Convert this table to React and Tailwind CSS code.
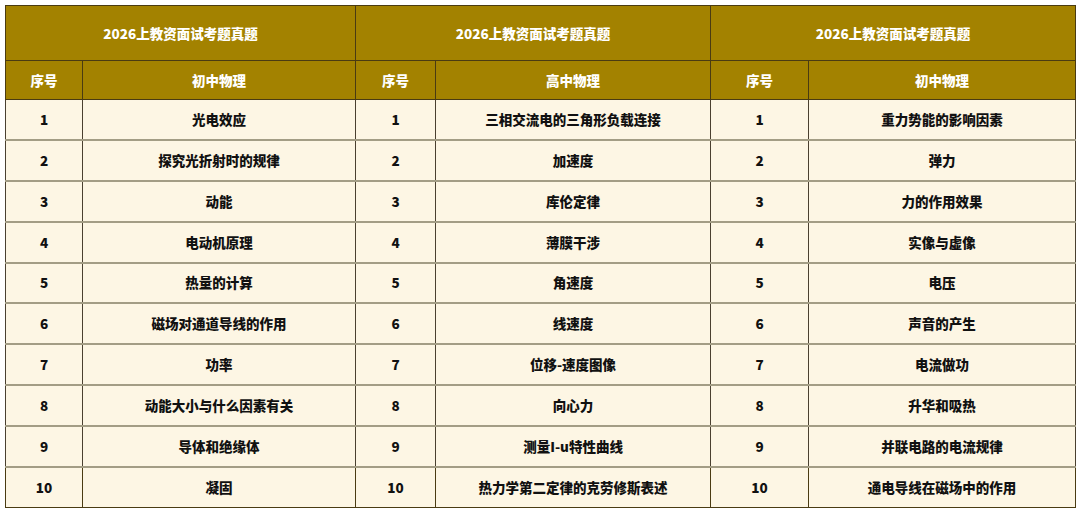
import React from "react";

const groups = [
  {
    subject: "初中物理",
    items: [
      "光电效应",
      "探究光折射时的规律",
      "动能",
      "电动机原理",
      "热量的计算",
      "磁场对通道导线的作用",
      "功率",
      "动能大小与什么因素有关",
      "导体和绝缘体",
      "凝固",
    ],
  },
  {
    subject: "高中物理",
    items: [
      "三相交流电的三角形负载连接",
      "加速度",
      "库伦定律",
      "薄膜干涉",
      "角速度",
      "线速度",
      "位移-速度图像",
      "向心力",
      "测量I-u特性曲线",
      "热力学第二定律的克劳修斯表述",
    ],
  },
  {
    subject: "初中物理",
    items: [
      "重力势能的影响因素",
      "弹力",
      "力的作用效果",
      "实像与虚像",
      "电压",
      "声音的产生",
      "电流做功",
      "升华和吸热",
      "并联电路的电流规律",
      "通电导线在磁场中的作用",
    ],
  },
];

const title = "2026上教资面试考题真题";

export default function App() {
  return (
    <div className="w-[1080px] h-[513px] bg-white p-[5px] font-['Noto_Sans_CJK_SC','Noto_Sans',sans-serif]">
      <table className="w-[1070px] table-fixed border-collapse border border-[#4a3b12] text-[13.5px] font-extrabold">
        <colgroup>
          <col className="w-[77px]" />
          <col className="w-[273px]" />
          <col className="w-[80px]" />
          <col className="w-[275px]" />
          <col className="w-[98px]" />
          <col className="w-[267px]" />
        </colgroup>
        <thead className="bg-[#a38200] text-white">
          <tr className="h-[55px]">
            {groups.map((g, i) => (
              <th key={i} colSpan={2} className="border border-[#4a3b12] text-center font-extrabold">
                {title}
              </th>
            ))}
          </tr>
          <tr className="h-[39px]">
            {groups.map((g, i) => (
              <React.Fragment key={i}>
                <th className="border border-[#4a3b12] text-center font-extrabold">序号</th>
                <th className="border border-[#4a3b12] text-center font-extrabold">{g.subject}</th>
              </React.Fragment>
            ))}
          </tr>
        </thead>
        <tbody className="bg-[#fdf6e4] text-[#111]">
          {groups[0].items.map((_, r) => {
            const last = r === groups[0].items.length - 1;
            const cell = last
              ? "border border-[#4a3b12] text-center leading-none"
              : "border-x border-x-[#4a4030] border-b-2 border-b-[#a39d85] text-center leading-none";
            return (
              <tr key={r} className="h-[40.8px]">
                {groups.map((g, i) => (
                  <React.Fragment key={i}>
                    <td className={cell}>{r + 1}</td>
                    <td className={cell}>{g.items[r]}</td>
                  </React.Fragment>
                ))}
              </tr>
            );
          })}
        </tbody>
      </table>
    </div>
  );
}
